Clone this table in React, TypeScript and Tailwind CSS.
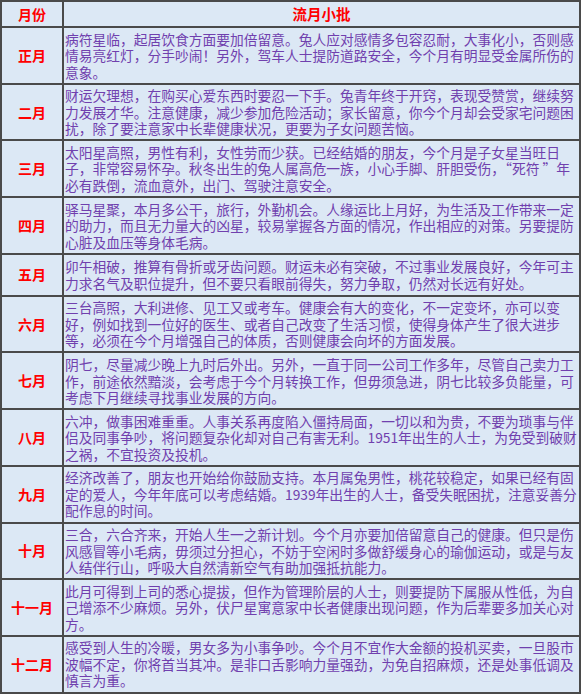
const rows: { month: string; lines: string[] }[] = [
  {
    month: '正月',
    lines: [
      '病符星临，起居饮食方面要加倍留意。兔人应对感情多包容忍耐，大事化小，否则感',
      '情易亮红灯，分手吵闹！另外，驾车人士提防道路安全，今个月有明显受金属所伤的',
      '意象。',
    ],
  },
  {
    month: '二月',
    lines: [
      '财运欠理想，在购买心爱东西时要忍一下手。兔青年终于开窍，表现受赞赏，继续努',
      '力发展才华。注意健康，减少参加危险活动；家长留意，你今个月却会受家宅问题困',
      '扰，除了要注意家中长辈健康状况，更要为子女问题苦恼。',
    ],
  },
  {
    month: '三月',
    lines: [
      '太阳星高照，男性有利，女性劳而少获。已经结婚的朋友，今个月是子女星当旺日',
      '子，非常容易怀孕。秋冬出生的兔人属高危一族，小心手脚、肝胆受伤，“死符 ”年',
      '必有跌倒，流血意外，出门、驾驶注意安全。',
    ],
  },
  {
    month: '四月',
    lines: [
      '驿马星聚，本月多公干，旅行，外勤机会。人缘运比上月好，为生活及工作带来一定',
      '的助力，而且无力量大的凶星，较易掌握各方面的情况，作出相应的对策。另要提防',
      '心脏及血压等身体毛病。',
    ],
  },
  {
    month: '五月',
    lines: [
      '卯午相破，推算有骨折或牙齿问题。财运未必有突破，不过事业发展良好，今年可主',
      '力求名气及职位提升，但不要只看眼前得失，努力争取，仍然对长远有好处。',
    ],
  },
  {
    month: '六月',
    lines: [
      '三台高照，大利进修、见工又或考车。健康会有大的变化，不一定变坏，亦可以变',
      '好，例如找到一位好的医生、或者自己改变了生活习惯，使得身体产生了很大进步',
      '等，必须在今个月增强自己的体质，否则健康会向坏的方面发展。',
    ],
  },
  {
    month: '七月',
    lines: [
      '阴七，尽量减少晚上九时后外出。另外，一直于同一公司工作多年，尽管自己卖力工',
      '作，前途依然黯淡，会考虑于今个月转换工作，但毋须急进，阴七比较多负能量，可',
      '考虑下月继续寻找事业发展的方向。',
    ],
  },
  {
    month: '八月',
    lines: [
      '六冲，做事困难重重。人事关系再度陷入僵持局面，一切以和为贵，不要为琐事与伴',
      '侣及同事争吵，将问题复杂化却对自己有害无利。1951年出生的人士，为免受到破财',
      '之祸，不宜投资及投机。',
    ],
  },
  {
    month: '九月',
    lines: [
      '经济改善了，朋友也开始给你鼓励支持。本月属兔男性，桃花较稳定，如果已经有固',
      '定的爱人，今年年底可以考虑结婚。1939年出生的人士，备受失眠困扰，注意妥善分',
      '配作息的时间。',
    ],
  },
  {
    month: '十月',
    lines: [
      '三合，六合齐来，开始人生一之新计划。今个月亦要加倍留意自己的健康。但只是伤',
      '风感冒等小毛病，毋须过分担心，不妨于空闲时多做舒缓身心的瑜伽运动，或是与友',
      '人结伴行山，呼吸大自然清新空气有助加强抵抗能力。',
    ],
  },
  {
    month: '十一月',
    lines: [
      '此月可得到上司的悉心提拔，但作为管理阶层的人士，则要提防下属服从性低，为自',
      '己增添不少麻烦。另外，伏尸星寓意家中长者健康出现问题，作为后辈要多加关心对',
      '方。',
    ],
  },
  {
    month: '十二月',
    lines: [
      '感受到人生的冷暖，男女多为小事争吵。今个月不宜作大金额的投机买卖，一旦股市',
      '波幅不定，你将首当其冲。是非口舌影响力量强劲，为免自招麻烦，还是处事低调及',
      '慎言为重。',
    ],
  },
]

export default function App() {
  return (
    <div className="w-[582px] h-[695px] bg-white font-['Noto_Sans_CJK_SC',sans-serif]">
      <table className="w-[581px] border-collapse bg-[#dce8f5] border-2 border-[#4a4a4a]">
        <thead>
          <tr className="h-[26px]">
            <th className="w-[62px] border-2 border-[#4a4a4a] text-[14px] font-bold text-[#ff0000] p-0">
              月份
            </th>
            <th className="border-2 border-[#4a4a4a] text-[14.5px] font-bold text-[#ff0000] p-0">
              流月小批
            </th>
          </tr>
        </thead>
        <tbody>
          {rows.map((r) => (
            <tr key={r.month} className={r.lines.length === 2 ? 'h-[42px]' : 'h-[56.7px]'}>
              <td className="border-2 border-[#4a4a4a] text-center text-[14px] font-bold text-[#ff0000] p-0">
                {r.month}
              </td>
              <td className="border-2 border-[#4a4a4a] pl-[1px] py-0 text-[13.75px] leading-[16.5px] text-[#7040ae] whitespace-nowrap">
                {r.lines.map((l, i) => (
                  <div key={i}>{l}</div>
                ))}
              </td>
            </tr>
          ))}
        </tbody>
      </table>
    </div>
  )
}
